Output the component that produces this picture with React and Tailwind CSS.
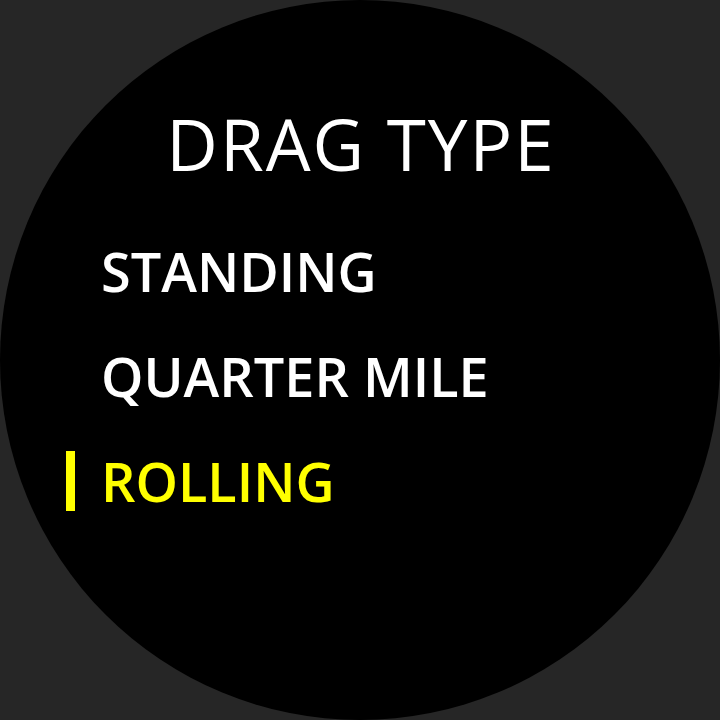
export default function App() {
  const items = [
    { label: "STANDING", active: false },
    { label: "QUARTER MILE", active: false },
    { label: "ROLLING", active: true },
  ];

  return (
    <div className="w-[720px] h-[720px] bg-[#262626] overflow-hidden">
      <div
        className="w-[720px] h-[720px] rounded-full bg-black flex flex-col pt-[108px]"
        style={{ fontFamily: '"Open Sans", "DejaVu Sans", sans-serif' }}
      >
        <h1 className="text-[71px] leading-[72px] text-white text-center tracking-[2px] pl-[2px]">
          DRAG TYPE
        </h1>
        <ul className="mt-[38px] flex flex-col">
          {items.map((item) => (
            <li key={item.label} className="h-[105px] flex items-center pl-[66px]">
              <span
                className={`w-[9px] h-[60px] ${item.active ? "bg-[#ffff00]" : "bg-transparent"}`}
              />
              <span
                className={`ml-[26px] text-[54px] leading-[54px] font-semibold ${item.active ? "text-[#ffff00]" : "text-white"}`}
              >
                {item.label}
              </span>
            </li>
          ))}
        </ul>
      </div>
    </div>
  );
}
